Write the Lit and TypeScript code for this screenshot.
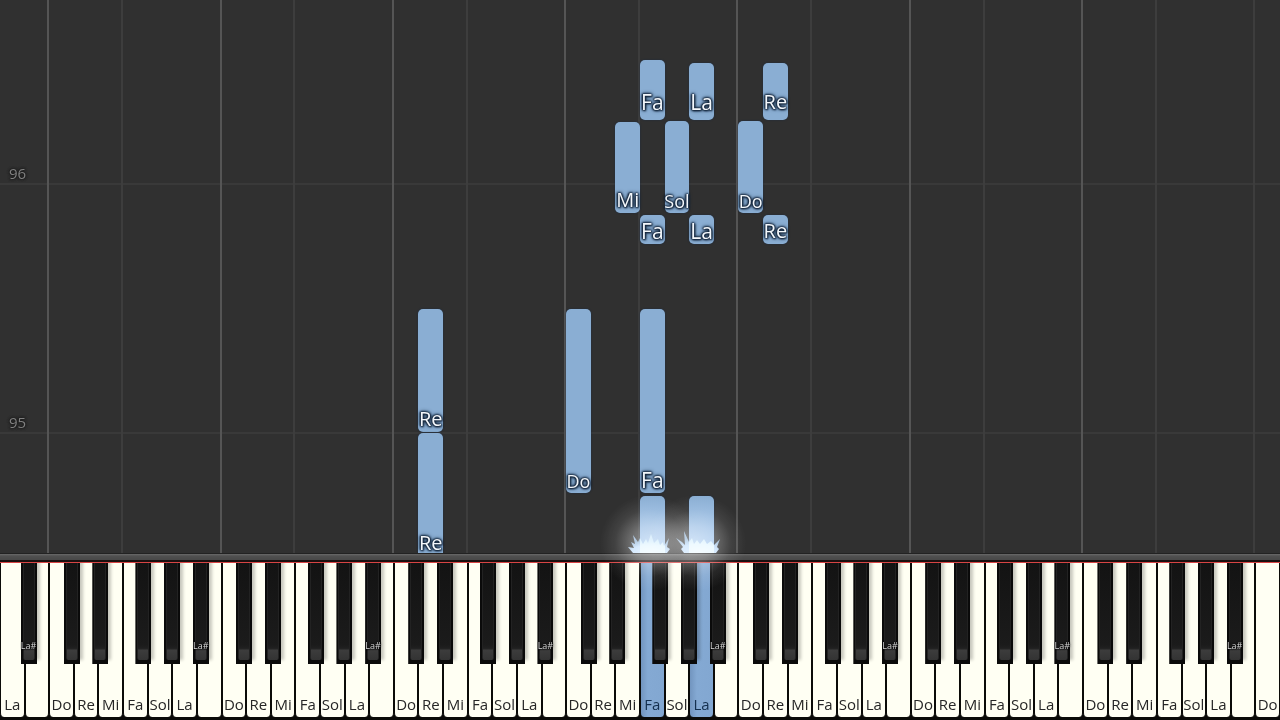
import { LitElement, html, svg, css } from "lit";
import { customElement, property } from "lit/decorators.js";
import { classMap } from "lit/directives/class-map.js";
import { styleMap } from "lit/directives/style-map.js";

const WHITE_KEYS = 52;
const SCALE = ["Do", "Re", "Mi", "Fa", "Sol", "La", "Si"];
const pct = (units: number) => `${(units / WHITE_KEYS) * 100}%`;
const nameOf = (key: number) => SCALE[(key + 5) % 7];

/* key: white key index; from/to: distance above the rail in pixels */
interface Note {
  key: number;
  from: number;
  to: number;
  raised?: boolean;
  sinking?: boolean;
  held?: boolean;
}

const NOTES: Note[] = [
  { key: 26, from: 433, to: 493, raised: true },
  { key: 28, from: 433, to: 490, raised: true },
  { key: 31, from: 433, to: 490, raised: true },
  { key: 25, from: 340, to: 431 },
  { key: 27, from: 340, to: 432 },
  { key: 30, from: 340, to: 432 },
  { key: 26, from: 309, to: 338 },
  { key: 28, from: 309, to: 338 },
  { key: 31, from: 309, to: 338 },
  { key: 17, from: 121, to: 244 },
  { key: 23, from: 60, to: 244 },
  { key: 26, from: 60, to: 244 },
  { key: 17, from: 0, to: 120, sinking: true },
  { key: 26, from: 0, to: 57, held: true },
  { key: 28, from: 0, to: 57, held: true },
];

const MEASURES = [
  { label: "96", at: 368 },
  { label: "95", at: 119 },
];

const PRESSED = [26, 28];

@customElement("piano-roll")
export class PianoRoll extends LitElement {
  static styles = css`
    :host {
      display: block;
      position: relative;
      background: #303030;
    }
    .line {
      position: absolute;
      top: 0;
      bottom: 0;
      width: 2px;
      margin-left: -2px;
      background: #3d3d3d;
    }
    .line.octave {
      background: #555;
    }
    .measure {
      position: absolute;
      left: 0;
      right: 0;
      height: 2px;
      background: #393939;
    }
    .number {
      position: absolute;
      left: 9px;
      bottom: 2px;
      font-size: 15px;
      line-height: 20px;
      color: #808080;
      text-shadow: 0 0 3px #1a1a1a, 0 0 3px #1a1a1a, 0 0 2px #1a1a1a;
    }
    .note {
      position: absolute;
      box-sizing: border-box;
      display: flex;
      justify-content: center;
      align-items: flex-end;
      border-radius: 5px;
      background: #8aaed3;
      box-shadow: 0 0 2px #1b2c42;
    }
    .note.held {
      border-radius: 5px 5px 0 0;
      background: linear-gradient(#8aaed3, #a9cdf5);
    }
    .note.sinking {
      border-radius: 5px 5px 0 0;
    }
    .name {
      padding-bottom: 3px;
      font-size: 21px;
      line-height: 20px;
      color: #f4f8fc;
      text-shadow: 0 0 2px #14263c, 0 0 2px #14263c, 0 0 3px #14263c,
        0 0 4px #14263c, 1px 1px 2px #14263c, -1px 0 2px #14263c;
    }
    .name.raised {
      padding-bottom: 8px;
    }
    .name.Re,
    .name.Mi {
      font-size: 20px;
    }
    .name.Do,
    .name.Sol {
      padding-bottom: 2px;
      font-size: 18px;
    }
    .sinking .name {
      padding-bottom: 0;
    }
  `;

  render() {
    const lines = [];
    for (let k = 2; k < WHITE_KEYS; k++) {
      const n = nameOf(k);
      if (n === "Do" || n === "Fa") lines.push({ k, octave: n === "Do" && k < 51 });
    }
    return html`
      ${MEASURES.map(
        (m) => html`<div class="measure" style=${styleMap({ bottom: `${m.at}px` })}>
          <span class="number">${m.label}</span>
        </div>`
      )}
      ${lines.map(
        (l) => html`<div
          class=${classMap({ line: true, octave: l.octave })}
          style=${styleMap({ left: pct(l.k) })}
        ></div>`
      )}
      ${NOTES.map((n) => {
        const name = nameOf(n.key);
        return html`<div
          class=${classMap({ note: true, held: !!n.held, sinking: !!n.sinking })}
          style=${styleMap({
            left: pct(n.key),
            width: pct(1),
            bottom: `${n.from}px`,
            height: `${n.to - n.from}px`,
          })}
        >
          ${n.held
            ? ""
            : html`<span class=${classMap({ name: true, [name]: true, raised: !!n.raised })}>${name}</span>`}
        </div>`;
      })}
    `;
  }
}

@customElement("piano-keyboard")
export class PianoKeyboard extends LitElement {
  @property({ attribute: false }) pressed: number[] = [];

  static styles = css`
    :host {
      display: block;
      position: relative;
      background: #0b0b08;
      border-top: 1px solid #d84444;
      padding-bottom: 3px;
      box-sizing: border-box;
    }
    button {
      appearance: none;
      margin: 0;
      border: 0;
      font-family: inherit;
      cursor: pointer;
    }
    .whites {
      display: grid;
      grid-template-columns: repeat(52, minmax(0, 1fr));
      height: 100%;
    }
    .white {
      display: flex;
      justify-content: center;
      align-items: flex-end;
      padding: 0 0 3px;
      border: solid #0b0b08;
      border-width: 0 1px;
      border-radius: 0 0 4px 4px;
      background: #fffff3;
      color: #262626;
      font-size: 15px;
      line-height: 20px;
    }
    .white.pressed {
      background: linear-gradient(90deg, #7295bf, #84a9d3 30%, #82a7d1);
      color: #14304f;
    }
    .black {
      position: absolute;
      top: 0;
      width: 1.25%;
      height: 101px;
      display: flex;
      justify-content: center;
      align-items: flex-end;
      padding: 0;
      background: #0a0a0a;
      box-shadow: 3px -4px 3px #00000038;
      clip-path: inset(0 -8px 0 0);
    }
    .black::before {
      content: "";
      position: absolute;
      inset: 0 2px 4px;
      background: linear-gradient(#131313, #1b1b1b 84%, #202020 88%, #3c3c3c 90%, #333);
      border: solid #222;
      border-width: 0 1px;
      border-radius: 0 0 2px 2px;
    }
    .tag {
      position: relative;
      padding-bottom: 12px;
      font-size: 9px;
      line-height: 12px;
      color: #d8d8d8;
      text-shadow: 0 0 2px #000, 0 0 2px #000;
    }
  `;

  render() {
    const semitone = 7 / 12;
    const blacks: { at: number; name: string }[] = [{ at: 2 - 2 * semitone, name: "La#" }];
    for (let octave = 0; octave < 7; octave++) {
      for (const [step, name] of [[1, "Do#"], [3, "Re#"], [6, "Fa#"], [8, "Sol#"], [10, "La#"]] as [number, string][]) {
        blacks.push({ at: 2 + octave * 7 + step * semitone, name });
      }
    }
    return html`
      <div class="whites">
        ${Array.from({ length: WHITE_KEYS }, (_, k) => {
          const name = nameOf(k);
          return html`<button
            type="button"
            aria-label=${name}
            class=${classMap({ white: true, pressed: this.pressed.includes(k) })}
          >${name === "Si" ? "" : name}</button>`;
        })}
      </div>
      ${blacks.map(
        (b) => html`<button type="button" class="black" aria-label=${b.name} style=${styleMap({ left: pct(b.at) })}>
          ${b.name === "La#" ? html`<span class="tag">La#</span>` : ""}
        </button>`
      )}
    `;
  }
}

@customElement("app-root")
export class AppRoot extends LitElement {
  static styles = css`
    :host {
      display: flex;
      flex-direction: column;
      position: relative;
      min-height: 100vh;
      overflow: hidden;
      background: #303030;
      font-family: "Open Sans", "Noto Sans", sans-serif;
    }
    piano-roll {
      flex: 1;
    }
    .rail {
      position: relative;
      height: 9px;
      box-sizing: border-box;
      border-top: 1px solid #222;
      border-bottom: 2px solid #1a1010;
      background: linear-gradient(#6a6a6a, #505050 2px, #484848);
    }
    piano-keyboard {
      height: 158px;
    }
    .spark {
      position: absolute;
      bottom: 86px;
      width: 160px;
      height: 160px;
      margin-left: -80px;
      pointer-events: none;
      mix-blend-mode: screen;
    }
  `;

  private spark(key: number) {
    const id = `halo${key}`;
    return html`<svg
      class="spark"
      viewBox="0 0 160 160"
      aria-hidden="true"
      style=${styleMap({ left: pct(key + 0.5) })}
    >
      ${svg`
        <defs>
          <radialGradient id=${id}>
            <stop offset="0" stop-color="#fff" stop-opacity=".48" />
            <stop offset=".35" stop-color="#eee" stop-opacity=".34" />
            <stop offset=".7" stop-color="#ddd" stop-opacity=".1" />
            <stop offset="1" stop-color="#ccc" stop-opacity="0" />
          </radialGradient>
          <radialGradient id=${id + "b"} cx=".5" cy="1" r=".7">
            <stop offset="0" stop-color="#e4f2ff" />
            <stop offset=".6" stop-color="#cce4fd" />
            <stop offset="1" stop-color="#b5d8fb" stop-opacity=".8" />
          </radialGradient>
          <filter id=${id + "c"}><feGaussianBlur stdDeviation=".6" /></filter>
        </defs>
        <ellipse cx=${key === 26 ? 78 : 74} cy="69" rx="50" ry="48" fill="url(#${id})" />
        <path filter="url(#${id}c)" fill="url(#${id}b)" d="${
          key === 26
            ? "M61 79 L56 73 L62 74 L59 68 L63 70 L61 61 L66 68 L68 64 L71 70 L74 65 L76 69 L79 60 L82 69 L86 65 L88 71 L91 68 L92 72 L97 64 L95 73 L98 75 L95 79 Z"
            : "M62 79 L59 75 L61 73 L54 64 L60 68 L63 71 L62 57 L67 68 L70 64 L72 70 L75 66 L78 70 L82 65 L85 70 L89 67 L92 71 L98 65 L95 73 L97 75 L94 79 Z"
        }" />
      `}
    </svg>`;
  }

  render() {
    return html`
      <piano-roll></piano-roll>
      <div class="rail"></div>
      <piano-keyboard .pressed=${PRESSED}></piano-keyboard>
      ${PRESSED.map((k) => this.spark(k))}
    `;
  }
}
